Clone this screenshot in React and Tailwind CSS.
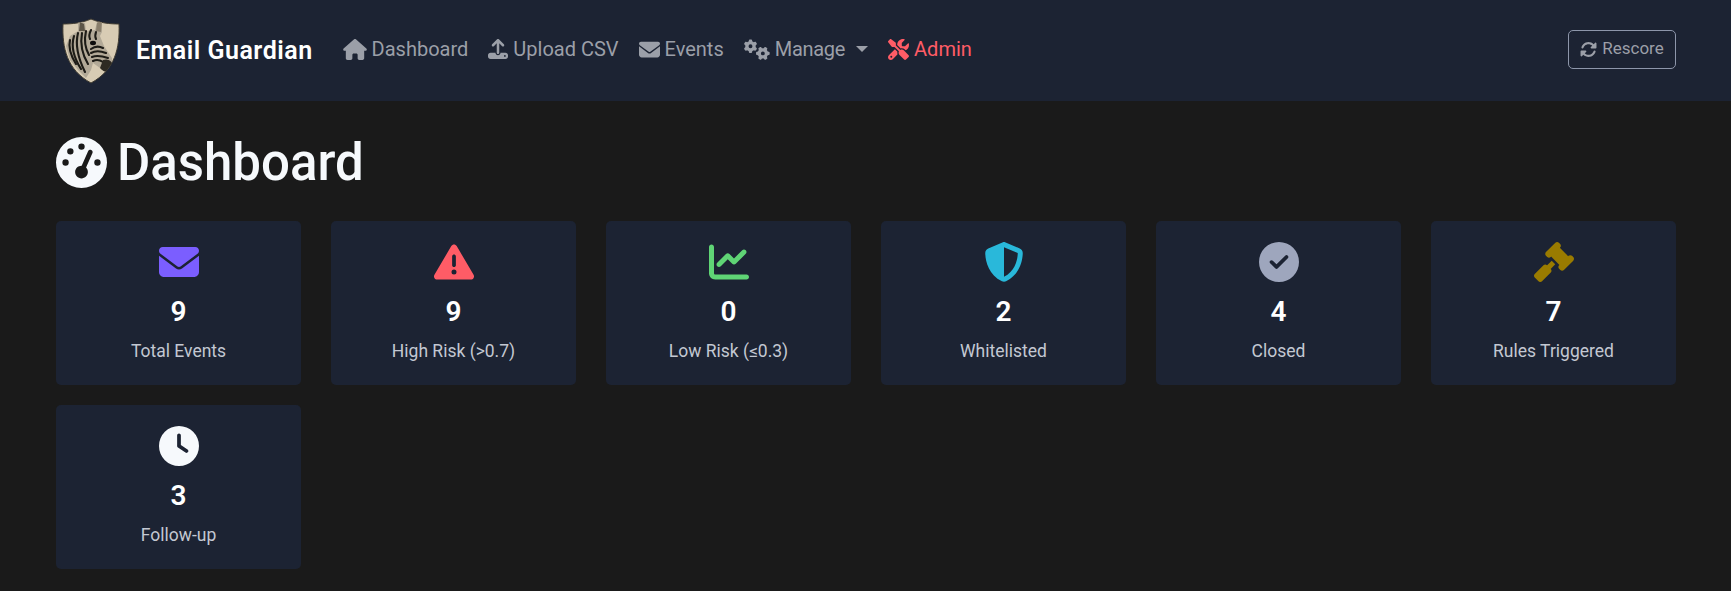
import React from 'react';
import {
  FaHouse, FaUpload, FaEnvelope, FaGears, FaScrewdriverWrench, FaRotate, FaGaugeHigh,
  FaTriangleExclamation, FaChartLine, FaShieldHalved, FaCircleCheck, FaGavel, FaClock,
} from 'react-icons/fa6';

const navLinks = [
  { label: 'Dashboard', icon: FaHouse, size: 'w-[24px] h-[21px]' },
  { label: 'Upload CSV', icon: FaUpload, size: 'w-[20px] h-[20px]' },
  { label: 'Events', icon: FaEnvelope, size: 'w-[21px] h-[21px]' },
  { label: 'Manage', icon: FaGears, size: 'w-[26px] h-[21px]', caret: true },
  { label: 'Admin', icon: FaScrewdriverWrench, size: 'w-[21px] h-[21px]', danger: true },
];

const stats = [
  { value: 9, label: 'Total Events', icon: FaEnvelope, color: 'text-[#7b5eff]' },
  { value: 9, label: 'High Risk (>0.7)', icon: FaTriangleExclamation, color: 'text-[#ff5c66]' },
  { value: 0, label: 'Low Risk (≤0.3)', icon: FaChartLine, color: 'text-[#5fd475]' },
  { value: 2, label: 'Whitelisted', icon: FaShieldHalved, color: 'text-[#29b8da]' },
  { value: 4, label: 'Closed', icon: FaCircleCheck, color: 'text-[#9ea6bd]' },
  { value: 7, label: 'Rules Triggered', icon: FaGavel, color: 'text-[#9a7b00]' },
  { value: 3, label: 'Follow-up', icon: FaClock, color: 'text-[#f6f9fc]' },
];

const shield = 'M29 1 C38 5 48 6 57 6 C58 30 53 52 29 65 C5 52 0 30 1 6 C10 6 20 5 29 1Z';

const ZebraLogo = () => (
  <svg viewBox="0 0 58 66" className="w-[58px] h-[66px] shrink-0">
    <defs>
      <clipPath id="logo-shield"><path d={shield} /></clipPath>
      <filter id="logo-soft"><feGaussianBlur stdDeviation="0.45" /></filter>
    </defs>
    <path d={shield} fill="#d8ccb4" stroke="#3f3b31" strokeWidth="1" />
    <g clipPath="url(#logo-shield)" filter="url(#logo-soft)">
      <path d="M16 3 L23 5 L24 13 L33 12 L35 4 L40 2 L40 14 L38 18 L42 28 L50 40 L51 50 L45 55 L38 50 L31 45 L29 52 L24 60 L16 52 L8 42 L4 28 L8 18 L16 13Z" fill="#b2a997" />
      <g fill="none" stroke="#1d1a16" strokeWidth="2.1" strokeLinecap="round">
        <path d="M8 22 C6 30 9 38 14 46" />
        <path d="M12 18 C9 28 12 40 19 51" />
        <path d="M16 15 C13 27 16 40 23 54" />
        <path d="M20 15 C18 26 20 36 26 46" />
        <path d="M24 13 C22 22 23 30 27 37" />
        <path d="M29 12 C27 16 27 19 28 21" />
        <path d="M34 14 C33 17 33 19 34 21" />
        <path d="M29 31 C33 28 37 28 41 30" />
        <path d="M29 35 C34 32 39 33 44 35" />
        <path d="M30 39 C35 37 40 38 46 40" />
        <path d="M31 43 C35 41 38 42 41 44" />
      </g>
      <path d="M18 4 L22 6 L23 13 L17 13Z" fill="#5c5446" />
      <path d="M35 5 L40 2 L39 14 L34 13Z" fill="#8a7f6c" />
      <ellipse cx="31" cy="25" rx="3" ry="2.2" fill="#100e0b" />
      <path d="M41 42 C46 40 51 43 51 49 C49 55 43 56 38 50Z" fill="#2f2a23" />
    </g>
  </svg>
);

const StatCard = ({ value, label, icon: Icon, color }) => (
  <div className="h-[164px] bg-[#1c2333] rounded-[5px] flex flex-col items-center pt-[21px]">
    <Icon className={`w-[40px] h-[40px] ${color}`} />
    <div className="mt-[9px] text-[28px] leading-[42px] font-semibold text-white">{value}</div>
    <div className="mt-[6px] text-[17.5px] leading-6 text-[#c3c8d2]">{label}</div>
  </div>
);

export default function App() {
  return (
    <div className="min-h-[591px] bg-[#1a1a1a] font-['Roboto','Liberation_Sans',sans-serif]">
      <nav className="h-[101px] bg-[#1c2333] flex items-center pl-[62px] pr-[55px]">
        <ZebraLogo />
        <span className="ml-[16px] text-[25px] tracking-[0.5px] font-semibold text-white">Email Guardian</span>
        <ul className="ml-[30px] mb-[3px] flex items-center gap-[20px]">
          {navLinks.map(({ label, icon: Icon, size, caret, danger }) => (
            <li key={label} className={`flex items-center gap-[5px] text-[20px] ${danger ? 'text-[#ff5c66]' : 'text-[#9b9fa8]'}`}>
              <Icon className={size} />
              <span className={caret ? 'tracking-[-0.3px]' : ''}>{label}</span>
              {caret && <span className="ml-[6px] w-0 h-0 border-x-[6px] border-x-transparent border-t-[6px] border-t-[#9b9fa8]" />}
            </li>
          ))}
        </ul>
        <button className="ml-auto mb-[3px] w-[108px] h-[39px] border border-[#8d96aa] rounded-[5px] flex items-center justify-center gap-[5px] text-[17px] text-[#9b9fa8]">
          <FaRotate className="w-[17px] h-[17px]" />
          Rescore
        </button>
      </nav>
      <main className="pl-[56px] pr-[55px] pb-[22px]">
        <h1 className="flex items-center gap-[10px] pt-[28px] h-[120px] pb-[25px] text-[51px] leading-[60px] font-medium text-[#f6f9fc]">
          <FaGaugeHigh className="w-[51px] h-[51px]" />
          Dashboard
        </h1>
        <div className="grid grid-cols-6 gap-x-[30px] gap-y-5">
          {stats.map((stat) => <StatCard key={stat.label} {...stat} />)}
        </div>
      </main>
    </div>
  );
}
